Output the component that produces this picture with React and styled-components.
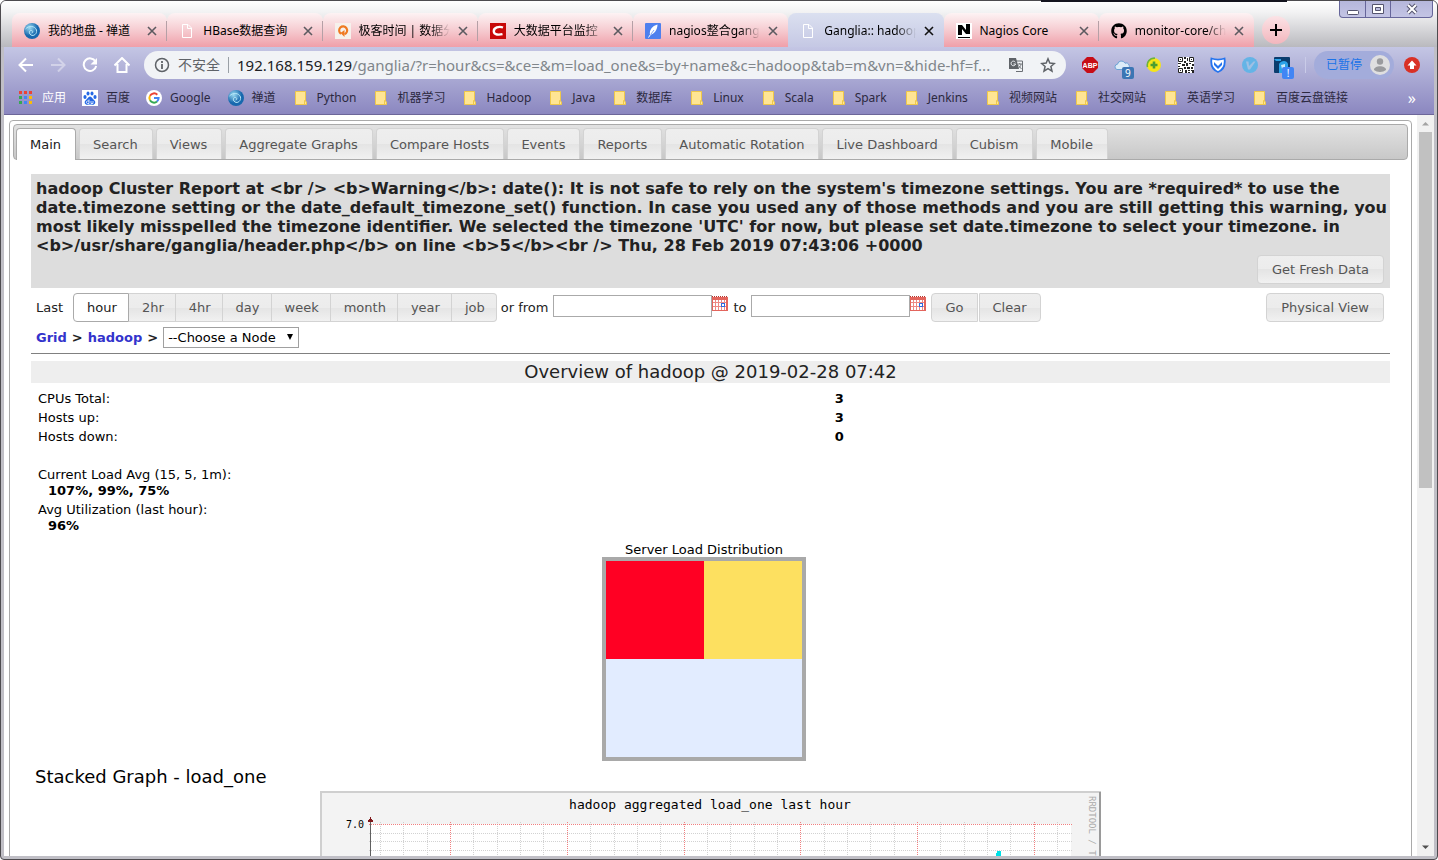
import React, { useState } from "react";
import styled, { createGlobalStyle, css } from "styled-components";
import { FaGithub } from "react-icons/fa";

const uiFont = '"Noto Sans", "Noto Sans CJK SC", sans-serif';
const pageFont = '"DejaVu Sans", sans-serif';

const GlobalStyle = createGlobalStyle`
  * { box-sizing: border-box; }
  html, body, #root { height: 100%; }
  body { margin: 0; overflow: hidden; font: 13px/16px ${pageFont}; color: #222; background: #fff; }
  button, input, select { font: inherit; color: inherit; margin: 0; }
  button { border: 0; padding: 0; background: none; cursor: pointer; }
  svg { display: block; flex: none; }
`;

/* ---------- browser window ---------- */

const BrowserWindow = styled.div`
  display: flex;
  flex-direction: column;
  height: 100vh;
  border: 1px solid #4d4b4f;
  border-radius: 6px 6px 4px 4px;
  background: #c0bfc6;
  overflow: hidden;
`;

const WindowBehind = styled.div`
  position: absolute;
  top: 0;
  right: 151px;
  width: 246px;
  height: 2px;
  background: #15151f;
`;

const TitleStrip = styled.div`
  display: flex;
  flex: none;
  height: 46px;
  padding-left: 11px;
  background: linear-gradient(#fff 0, #f1f1f2 12px, #b9b9be 46px);
  font: 12px/16px ${uiFont};
  color: #000;
`;

const TabRow = styled.div`
  display: flex;
  flex: 0 1 1242px;
  min-width: 0;
  padding-top: 12px;
`;

const BrowserTab = styled.button`
  display: flex;
  flex: 1 1 0;
  min-width: 0;
  align-items: center;
  gap: 8px;
  position: relative;
  height: 34px;
  padding: 2px 10px 0 12px;
  text-align: left;
  border-radius: 8px 8px 0 0;
  background: linear-gradient(#fdf3f4, #f6ccd1 50%, #ef9fa9);
  &:not(:last-child)::after {
    content: "";
    position: absolute;
    right: 0;
    top: 8px;
    width: 1px;
    height: 20px;
    background: #b5a0a6;
  }
  &:has(+ [aria-current])::after { display: none; }
  ${(p) => p.$active && css`
    background: linear-gradient(#dbe0f0, #c5c8e4);
    &&::after { display: none; }
  `}
`;

const TabTitle = styled.span`
  flex: 1;
  min-width: 0;
  overflow: hidden;
  white-space: nowrap;
  ${(p) => p.$fade && css`
    mask-image: linear-gradient(90deg, #000 calc(100% - 20px), transparent);
  `}
`;

const NewTabButton = styled.button`
  display: grid;
  place-items: center;
  flex: none;
  width: 28px;
  height: 28px;
  margin: 15px 0 0 8px;
  border-radius: 14px;
  background: linear-gradient(#fbe3e6, #f3b6bd);
`;

const WindowButtons = styled.div`
  display: flex;
  flex: none;
  height: 17px;
  margin: 0 4px 0 auto;
  border: 1px solid #66669a;
  border-top: 0;
  border-radius: 0 0 4px 4px;
  background: linear-gradient(#b5b7db, #c3c4e4);
`;

const WindowButton = styled.button`
  display: grid;
  place-items: center;
  width: ${(p) => (p.$wide ? 42 : 25)}px;
  & + & { border-left: 1px solid #66669a; }
`;

const BrowserChrome = styled.div`
  flex: none;
  margin: 0 3px;
  height: 68px;
  border-bottom: 1px solid #6c6699;
  background: linear-gradient(#c4c6e4, #8b87c0);
  font: 12px/16px ${uiFont};
  color: #2c2940;
`;

const Toolbar = styled.div`
  display: flex;
  align-items: center;
  height: 36px;
  padding: 0 14px;
`;

const NavButtons = styled.div`
  display: flex;
  gap: 16px;
  margin-right: 14px;
`;

const IconButton = styled.button`
  display: grid;
  place-items: center;
  position: relative;
  flex: none;
  width: 16px;
  height: 16px;
  opacity: ${(p) => (p.$dim ? 0.4 : 1)};
`;

const Omnibox = styled.div`
  display: flex;
  flex: 1;
  align-items: center;
  min-width: 0;
  height: 28px;
  padding: 0 10px;
  border-radius: 14px;
  background: #f1f3f6;
  font-size: 15px;
  line-height: 20px;
  color: #202124;
`;

const Security = styled.span`
  margin-left: 8px;
  padding-right: 8px;
  border-right: 1px solid #9aa0a6;
  font-size: 14px;
  line-height: 16px;
  color: #5f6368;
  white-space: nowrap;
`;

const Host = styled.span`
  margin-left: 8px;
`;

const UrlInput = styled.input`
  flex: 1;
  min-width: 0;
  height: 20px;
  padding: 0;
  border: 0;
  background: none;
  color: #80868b;
  text-overflow: ellipsis;
`;

const OmniActions = styled.div`
  display: flex;
  gap: 16px;
  margin-left: 8px;
`;

const Extensions = styled.div`
  display: flex;
  gap: 16px;
  margin: 0 15px 0 16px;
`;

const Badge = styled.span`
  position: absolute;
  left: 8px;
  top: 10px;
  width: 12px;
  height: 12px;
  border-radius: 2px;
  background: ${(p) => p.$color};
  color: #fff;
  font-size: 10px;
  line-height: 12px;
  text-align: center;
`;

const ProfilePill = styled.button`
  display: flex;
  align-items: center;
  gap: 8px;
  height: 28px;
  margin: 0 10px 0 8px;
  padding: 0 4px 0 12px;
  border-radius: 14px;
  background: #a3acdb;
  color: #1a73e8;
  white-space: nowrap;
`;

const Divider = styled.span`
  width: 1px;
  height: 16px;
  background: #c9cbe8;
`;

const BookmarkBar = styled.nav`
  display: flex;
  align-items: center;
  gap: 16px;
  height: 30px;
  padding: 0 18px 0 14px;
`;

const Bookmark = styled.a`
  display: flex;
  align-items: center;
  gap: 8px;
  color: ${(p) => (p.$light ? "#fff" : "inherit")};
  text-decoration: none;
  white-space: nowrap;
  &:nth-child(n + 3) { padding-right: 1px; }
`;

const MoreButton = styled.button`
  margin-left: auto;
  color: #fff;
  font-size: 16px;
`;

const Viewport = styled.div`
  display: flex;
  flex: 1;
  min-height: 0;
  margin: 0 3px 3px;
  background: #fff;
`;

const ScrollArea = styled.div`
  flex: 1;
  min-width: 0;
  padding: 5px;
  overflow: hidden;
`;

const ScrollBar = styled.div`
  display: flex;
  flex: none;
  flex-direction: column;
  align-items: center;
  width: 17px;
  background: #f1f1f1;
`;

const ScrollThumb = styled.div`
  width: 13px;
  height: 48%;
  margin-bottom: auto;
  background: #c1c1c1;
`;

/* ---------- ganglia page ---------- */

const TabsFrame = styled.div`
  padding: 3px;
  border: 1px solid #aaa;
  border-radius: 4px;
`;

const NavTabs = styled.nav`
  display: flex;
  gap: 3px;
  height: 36px;
  padding: 3px 2px 0;
  border: 1px solid #aaa;
  border-radius: 4px;
  background: linear-gradient(#e2e2e2, #c8c8c8);
`;

const NavTab = styled.a`
  height: 31px;
  padding: 8px 14px 0 13px;
  border: 1px solid #d3d3d3;
  border-bottom: 0;
  border-radius: 4px 4px 0 0;
  background: linear-gradient(#eee 0, #ececec 50%, #e4e4e4 50%, #f1f1f1);
  color: #555;
  text-decoration: none;
  white-space: nowrap;
  ${(p) => p.$active && css`
    height: 32px;
    border-color: #aaa;
    background: #fff;
    color: #212121;
  `}
`;

const Panel = styled.main`
  padding: 14px 18px;
`;

const ReportHeader = styled.header`
  padding: 5px 0 4px 5px;
  background: #ddd;
`;

const ReportTitle = styled.h1`
  margin: 0;
  font-size: 16px;
  line-height: 19px;
  font-weight: 700;
`;

const buttonFace = css`
  border: 1px solid #d3d3d3;
  background: linear-gradient(#eee 0, #ececec 50%, #e4e4e4 50%, #f1f1f1);
  color: #555;
`;

const Button = styled.button`
  ${buttonFace}
  height: 29px;
  padding: 0 ${(p) => (p.$roomy ? 14 : 13)}px;
  border-radius: ${(p) => p.$corners || "4px"};
  white-space: nowrap;
`;

const ButtonLine = styled.div`
  display: flex;
  justify-content: flex-end;
  margin-right: 6px;
`;

const FilterRow = styled.div`
  display: flex;
  align-items: center;
  height: 29px;
  margin-top: 5px;
  padding: 0 6px 0 5px;
  white-space: nowrap;
`;

const RangeGroup = styled.fieldset`
  display: flex;
  min-width: 0;
  margin: 0 4px 0 10px;
  padding: 0;
  border: 0;
`;

const RangeOption = styled.label`
  ${buttonFace}
  height: 29px;
  padding: 6px 11px 0 13px;
  border-left-width: 0;
  cursor: pointer;
  &:first-of-type { border-left-width: 1px; border-radius: 4px 0 0 4px; }
  &:last-of-type { border-radius: 0 4px 4px 0; }
  &:has(input:checked) { border-color: #aaa; background: #fff; color: #212121; }
  input { appearance: none; position: absolute; width: 0; height: 0; }
`;

const DateField = styled.span`
  display: flex;
  align-self: flex-start;
  margin: 2px 5px 0;
  input {
    width: 159px;
    height: 22px;
    padding: 1px 4px;
    border: 1px solid #aaa;
    background: #fff;
  }
`;

const CalendarButton = styled.button`
  align-self: flex-start;
`;

const ButtonPair = styled.span`
  display: flex;
  gap: 1px;
  margin-right: auto;
`;

const Breadcrumb = styled.div`
  display: flex;
  align-items: center;
  gap: 5px;
  margin-top: 5px;
  padding: 0 5px 5px;
  border-bottom: 1px solid #808080;
  font-weight: 700;
  a { color: #3333cc; text-decoration: none; }
`;

const NodeSelect = styled.span`
  position: relative;
  select {
    appearance: none;
    display: block;
    width: 136px;
    height: 21px;
    padding: 0 4px;
    border: 1px solid #a0a0a0;
    border-radius: 0;
    background: #fff;
    color: #000;
    font-weight: 400;
  }
  svg { position: absolute; right: 5px; top: 6px; pointer-events: none; }
`;

const Overview = styled.h2`
  margin: 7px 0 6px;
  background: #eee;
  font-size: 18px;
  line-height: 22px;
  font-weight: 400;
  text-align: center;
`;

const Stats = styled.table`
  width: 100%;
  border-collapse: collapse;
  line-height: 16px;
  color: #000;
  th, td { padding: 2px 7px 1px; text-align: left; vertical-align: top; }
  th { width: 59%; font-weight: 400; }
  td { padding-left: 2px; font-weight: 700; }
`;

const Detail = styled.div`
  padding-left: 10px;
  font-weight: 700;
`;

const Spacer = styled.tr`
  height: 19px;
`;

const LoadFigure = styled.figure`
  display: flex;
  flex-direction: column;
  align-items: center;
  margin: 7px 13px 0 0;
  line-height: 15px;
  color: #000;
`;

const LoadGrid = styled.div`
  display: grid;
  grid-template-columns: 1fr 1fr;
  grid-template-rows: 1fr 1fr;
  width: 204px;
  height: 204px;
  border: 4px solid #a9a9a9;
`;

const LoadCell = styled.div`
  background: ${(p) => p.$color};
  grid-column: span ${(p) => p.$span || 1};
`;

const SectionTitle = styled.h2`
  margin: 4px 0 2px 4px;
  font-size: 18px;
  line-height: 24px;
  font-weight: 400;
  color: #000;
`;

const GraphHolder = styled.div`
  display: flex;
  justify-content: center;
`;

/* ---------- drawings ---------- */

const Swirl = () => (
  <svg width="16" height="16" viewBox="0 0 16 16">
    <defs>
      <radialGradient id="swirl" cx="35%" cy="30%"><stop offset="0" stopColor="#9edcf2" /><stop offset="1" stopColor="#1768ae" /></radialGradient>
    </defs>
    <circle cx="8" cy="8" r="8" fill="url(#swirl)" />
    <path d="M1.500 6C5 2 11 3 12.500 7c.8 4-3 6.500-5.500 5-2.500-1.500-2-5 .5-4.500 1.800.3 1.500 2.500.2 2.500" fill="none" stroke="#b5e6f8" strokeWidth="1" />
  </svg>
);
const Doc = () => (
  <svg width="16" height="16" viewBox="0 0 16 16">
    <path d="M3.500 1.500h5.500l3.500 3.500v9.500h-9zM8.500 1.500v4h4" fill="none" stroke="#fff" />
  </svg>
);
const GeekTime = () => (
  <svg width="16" height="16" viewBox="0 0 16 16">
    <rect width="16" height="16" fill="#f6f1ec" />
    <path d="M6 10.800A4 4 0 1 1 9.500 11.200" fill="none" stroke="#ef7a22" strokeWidth="2.200" />
    <path d="M9.500 7v7L5.500 10z" fill="#ef7a22" />
  </svg>
);
const Csdn = () => (
  <svg width="16" height="16" viewBox="0 0 16 16">
    <rect width="16" height="16" fill="#c80808" />
    <path d="M13 4.500C9 3 3.500 4.500 3.800 8.500c.3 3.500 5 3.500 8.700 2.700" fill="none" stroke="#fff" strokeWidth="2.400" />
  </svg>
);
const Feather = () => (
  <svg width="16" height="16" viewBox="0 0 16 16">
    <rect width="16" height="16" rx="1" fill="#4f80ee" />
    <path d="M12.500 1.500C7 3 4 7 5 12c4-1 7.500-5 7.500-10.500z" fill="#fff" />
    <path d="M4.500 13 9 7" stroke="#4f80ee" strokeWidth=".7" />
    <path d="M3.500 14.500 5.500 11.500" stroke="#fff" strokeWidth="1" />
  </svg>
);
const Nagios = () => (
  <svg width="16" height="16" viewBox="0 0 16 16">
    <rect width="16" height="16" fill="#fff" />
    <path d="M2 12V2h4l4 5V1h4v10h-4L6 6v6z" fill="#000" />
    <path d="M2 14.500h12" stroke="#000" />
  </svg>
);
const Close = ({ color = "#5c5a60" }) => (
  <svg width="10" height="10" viewBox="0 0 10 10"><path d="M1 1l8 8M9 1L1 9" stroke={color} strokeWidth="1.600" /></svg>
);
const Folder = () => (
  <svg width="16" height="16" viewBox="0 0 16 16">
    <path d="M2.500 1.500h10v9.500l1 1v2.500h-11z" fill="#ffe594" stroke="#efc84a" />
    <path d="M11.500 14v-3.500h1" fill="none" stroke="#efc84a" />
  </svg>
);
const AppsIcon = () => (
  <svg width="16" height="16" viewBox="0 0 16 16">
    {["#ea4335", "#ea4335", "#ea4335", "#34a853", "#4285f4", "#fbbc05", "#34a853", "#4285f4", "#fbbc05"].map((c, i) => (
      <rect key={i} x={1 + (i % 3) * 5} y={1 + Math.floor(i / 3) * 5} width="3" height="3" fill={c} />
    ))}
  </svg>
);
const Baidu = () => (
  <svg width="16" height="16" viewBox="0 0 16 16">
    <rect width="16" height="16" fill="#fff" />
    <g fill="#2468e5">
      <ellipse cx="3" cy="7" rx="1.600" ry="2" /><ellipse cx="6" cy="3.500" rx="1.500" ry="2.100" />
      <ellipse cx="10" cy="3.500" rx="1.500" ry="2.100" /><ellipse cx="13" cy="7" rx="1.600" ry="2" />
      <path d="M8 6.500c2 0 2.500 2.500 4 3.500 2.500 2 1 5-1.500 4.800-2-.3-3-.3-5 0C3 15 1.500 12 4 10c1.500-1 2-3.500 4-3.500z" />
    </g>
    <path d="M7 9.500v4H5.500c-1.500 0-1.500-2.500 0-2.500H7M9 11v2.500h2V11" fill="none" stroke="#fff" strokeWidth=".8" />
  </svg>
);
const Google = () => (
  <svg width="16" height="16" viewBox="0 0 16 16">
    <circle cx="8" cy="8" r="8" fill="#fff" />
    <g fill="none" strokeWidth="2">
      <path d="M11.300 4.700A4.600 4.600 0 0 0 4 5.800" stroke="#ea4335" /><path d="M4 5.800a4.600 4.600 0 0 0 0 4.500" stroke="#fbbc05" />
      <path d="M4 10.300a4.600 4.600 0 0 0 7 1.200" stroke="#34a853" /><path d="M11 11.500A4.600 4.600 0 0 0 12.600 8H8" stroke="#4285f4" />
    </g>
  </svg>
);
const Stroke = ({ d, color = "#fff", w = 2 }) => (
  <svg width="16" height="16" viewBox="0 0 16 16"><path d={d} fill="none" stroke={color} strokeWidth={w} /></svg>
);
const Reload = () => (
  <svg width="16" height="16" viewBox="0 0 16 16">
    <path d="M13.500 4.500A6.300 6.300 0 1 0 14.200 9" fill="none" stroke="#fff" strokeWidth="2" />
    <path d="M15 1v6.500H8.500z" fill="#fff" />
  </svg>
);
const Translate = () => (
  <svg width="16" height="16" viewBox="0 0 16 16">
    <path d="M6 4h8.500v10.500H8" fill="#f1f3f6" stroke="#6b6f74" />
    <path d="M1 1h7l3 11H1z" fill="#5f6368" />
    <path d="M7.300 5.200A2.300 2.300 0 1 0 7.600 7H5.500" fill="none" stroke="#f1f3f6" />
    <path d="M9.500 7H14M11.700 6v1M13 7c0 2-1.500 3.500-3 4.500M10.500 8.500l3 3.500" fill="none" stroke="#6b6f74" strokeWidth=".9" />
  </svg>
);
const Abp = () => (
  <svg width="16" height="16" viewBox="0 0 16 16">
    <path d="M5 0h6l5 5v6l-5 5H5l-5-5V5z" fill="#c70d16" />
    <text x="8" y="10.500" fontSize="7" fontWeight="700" fill="#fff" textAnchor="middle" fontFamily="Liberation Sans">ABP</text>
  </svg>
);
const Cloud = () => (
  <svg width="16" height="16" viewBox="0 0 16 16">
    <path d="M3 12.500a2.700 2.700 0 0 1 .5-5.300 4 4 0 0 1 7.500-1 3.200 3.200 0 0 1 2 6.300z" fill="#dcecf8" stroke="#6ba2d4" />
  </svg>
);
const PlusBall = () => (
  <svg width="16" height="16" viewBox="0 0 16 16">
    <circle cx="8" cy="8" r="7" fill="#f6e51a" />
    <path d="M1.500 10A7 7 0 0 1 9 1.200" fill="none" stroke="#6db33b" strokeWidth="1.600" />
    <path d="M8 4.500v7M4.500 8h7" stroke="#4a9e32" strokeWidth="2.600" />
  </svg>
);
const QrCode = () => (
  <svg width="16" height="16" viewBox="0 0 16 16">
    <rect width="16" height="16" fill="#fff" />
    <path d="M.5.500h4v4h-4zM11.500.500h4v4h-4zM.5 11.500h4v4h-4z" fill="none" stroke="#222" />
    <path d="M2 2h1v1H2zM13 2h1v1h-1zM2 13h1v1H2zM6 0h2v2H6zM9 1h1v3H9zM6 4h2v2H6zM0 6h3v1H0zM4 7h3v2H4zM8 6h2v3H8zM11 6h2v1h-2zM14 7h2v2h-2zM0 9h2v1H0zM6 10h2v2H6zM9 10h3v2H9zM13 10h2v2h-2zM7 13h2v3H7zM10 13h2v1h-2zM13 13h3v3h-2v-2h-1zM10 15h2v1h-2z" fill="#222" />
  </svg>
);
const Shield = () => (
  <svg width="16" height="16" viewBox="0 0 16 16">
    <path d="M1.500 1.500C6 3 10 3 14.500 1.500 15.500 8 13 13 8 15 3 13 .5 8 1.500 1.500z" fill="#fff" stroke="#2574ee" strokeWidth="1.800" />
    <path d="M4 5l4 4 4-4v3l-4 4-4-4z" fill="#2574ee" />
  </svg>
);
const VimBall = () => (
  <svg width="16" height="16" viewBox="0 0 16 16">
    <circle cx="8" cy="8" r="8" fill="#64b4e6" />
    <path d="M4 4.500h2.500L7 9l4.500-4.500h2L8 12.500H6z" fill="#9fc0e4" />
  </svg>
);
const Portrait = () => (
  <svg width="16" height="16" viewBox="0 0 16 16">
    <rect width="16" height="16" rx="1" fill="#0b3d6e" />
    <path d="M0 2h7v2H2zM5 7c2-4 8-4 9 0v9H5z" fill="#2ba3e8" /><path d="M7 8l4-1v5H8z" fill="#c7e9f8" />
  </svg>
);
const Avatar = () => (
  <svg width="20" height="20" viewBox="0 0 20 20">
    <circle cx="10" cy="10" r="10" fill="#dfdfe0" /><circle cx="10" cy="6.500" r="3.200" fill="#9a9b9e" />
    <path d="M4 15c0-5 12-5 12 0-3 2.500-9 2.500-12 0z" fill="#9a9b9e" />
  </svg>
);
const UpdateIcon = () => (
  <svg width="16" height="16" viewBox="0 0 16 16">
    <circle cx="8" cy="8" r="8" fill="#d93025" /><path d="M8 3.500l4.500 5H10V12H6V8.500H3.500z" fill="#fff" />
  </svg>
);
const Calendar = () => (
  <svg width="16" height="16" viewBox="0 0 16 16">
    <path d="M0 1.500h16" stroke="#b5332b" strokeDasharray="1 1" />
    <rect y="2" width="16" height="14" fill="#e3655d" />
    <path d="M1 5h13v10H1z" fill="#fff" />
    <path d="M1 7.500h13M1 11.500h13M3.500 5v10M6.500 5v10M9.500 5v10M12.500 5v10" stroke="#ee8a84" />
    <rect x="9.500" y="8.500" width="3" height="3" fill="#fff" stroke="#2f6be0" />
  </svg>
);

const gridLines = Array.from({ length: 30 }, (_, i) => ({ x: Math.round(60 + i * 23.35) + 0.5, major: i % 5 === 3 }));

const LoadGraph = () => (
  <svg width="781" height="120" viewBox="0 0 781 120" shapeRendering="crispEdges" fontFamily='"DejaVu Sans Mono", monospace'>
    <rect width="781" height="120" fill="#f3f3f3" />
    <path d="M0 1h781M1 0v120" stroke="#cfcfcf" strokeWidth="2" />
    <path d="M780 1v119" stroke="#9a9a9a" strokeWidth="2" />
    <rect x="51" y="33" width="700" height="87" fill="#fff" />
    <text x="390" y="18" fontSize="13" textAnchor="middle" fill="#000">hadoop aggregated load_one last hour</text>
    <text x="44" y="37" fontSize="10" textAnchor="end" fill="#000">7.0</text>
    {[42.5, 50.5, 59.5, 68.5].map((y) => (
      <path key={y} d={`M49 ${y}h704`} stroke="#d2d2d2" strokeDasharray="1 1" />
    ))}
    {gridLines.map(({ x, major }) => (
      <path key={x} d={`M${x} 31v89`} stroke={major ? "#f08080" : "#d2d2d2"} strokeDasharray="1 1" />
    ))}
    <path d="M49 33.500h704" stroke="#f08080" strokeDasharray="1 1" />
    <path d="M50.500 120V30" stroke="#606060" />
    <path d="M47.500 31h6l-3-5z" fill="#80171a" />
    <path d="M676 120V64l1-4h4v3l1 3v54z" fill="#00e0e6" />
    <text transform="translate(769 5) rotate(90)" fontSize="9" fill="#aaa">RRDTOOL / TOBI OETIKER</text>
  </svg>
);

/* ---------- data ---------- */

const browserTabs = [
  { icon: <Swirl />, title: "我的地盘 - 禅道" },
  { icon: <Doc />, title: "HBase数据查询" },
  { icon: <GeekTime />, title: "极客时间 | 数据分", fade: true },
  { icon: <Csdn />, title: "大数据平台监控（", fade: true },
  { icon: <Feather />, title: "nagios整合gang", fade: true },
  { icon: <Doc />, title: "Ganglia:: hadoop", active: true, fade: true },
  { icon: <Nagios />, title: "Nagios Core" },
  { icon: <FaGithub size={16} />, title: "monitor-core/ch", fade: true },
];

const bookmarks = [
  [<AppsIcon />, "应用"], [<Baidu />, "百度"], [<Google />, "Google"], [<Swirl />, "禅道"],
  ...["Python", "机器学习", "Hadoop", "Java", "数据库", "Linux", "Scala", "Spark", "Jenkins", "视频网站", "社交网站", "英语学习", "百度云盘链接"].map((t) => [<Folder />, t]),
];

const extensions = [
  { name: "Adblock Plus", icon: <Abp /> },
  { name: "Weather", icon: <Cloud />, badge: "9", color: "#3c76b4" },
  { name: "Green Plus", icon: <PlusBall /> },
  { name: "QR code", icon: <QrCode /> },
  { name: "Shield", icon: <Shield /> },
  { name: "Vim", icon: <VimBall /> },
  { name: "Portrait", icon: <Portrait />, badge: "!", color: "#4285f4" },
];

const navTabs = ["Main", "Search", "Views", "Aggregate Graphs", "Compare Hosts", "Events", "Reports", "Automatic Rotation", "Live Dashboard", "Cubism", "Mobile"];
const ranges = ["hour", "2hr", "4hr", "day", "week", "month", "year", "job"];

const DatePicker = ({ label }) => (
  <DateField>
    <input type="text" aria-label={label} />
    <CalendarButton aria-label={`Pick date: ${label}`}><Calendar /></CalendarButton>
  </DateField>
);

export default function App() {
  const [range, setRange] = useState("hour");
  return (
    <BrowserWindow>
      <GlobalStyle />
      <WindowBehind />
      <TitleStrip>
        <TabRow>
          {browserTabs.map((t) => (
            <BrowserTab key={t.title} $active={t.active} aria-current={t.active ? "page" : undefined}>
              {t.icon}
              <TabTitle $fade={t.fade}>{t.title}</TabTitle>
              <Close color={t.active ? "#111" : undefined} />
            </BrowserTab>
          ))}
        </TabRow>
        <NewTabButton aria-label="New tab">
          <svg width="12" height="12" viewBox="0 0 12 12"><path d="M6 0v12M0 6h12" stroke="#000" strokeWidth="2" /></svg>
        </NewTabButton>
        <WindowButtons>
          <WindowButton aria-label="Minimize">
            <svg width="12" height="12" viewBox="0 0 12 12"><rect x=".5" y="7.500" width="11" height="4" rx="1" fill="#fff" stroke="#55556f" /></svg>
          </WindowButton>
          <WindowButton aria-label="Maximize">
            <svg width="12" height="12" viewBox="0 0 12 12"><path d="M.5 1.500h11v9H.5zM3.500 4.500h5v3h-5z" fill="#fff" fillRule="evenodd" stroke="#55556f" /></svg>
          </WindowButton>
          <WindowButton $wide aria-label="Close">
            <svg width="12" height="12" viewBox="0 0 12 12"><path d="M2 2l8 8M10 2l-8 8" stroke="#55556f" strokeWidth="4" /><path d="M2 2l8 8M10 2l-8 8" stroke="#fff" strokeWidth="2" /></svg>
          </WindowButton>
        </WindowButtons>
      </TitleStrip>

      <BrowserChrome>
        <Toolbar>
          <NavButtons>
            <IconButton aria-label="Back"><Stroke d="M15 8H2M8 1.500L1.500 8 8 14.500" /></IconButton>
            <IconButton $dim aria-label="Forward"><Stroke d="M1 8h13M8 1.500L14.500 8 8 14.500" /></IconButton>
            <IconButton aria-label="Reload"><Reload /></IconButton>
            <IconButton aria-label="Home"><Stroke d="M.5 8.500L8 1l7.500 7.500M3.500 7v8h9V7" /></IconButton>
          </NavButtons>
          <Omnibox>
            <svg width="16" height="16" viewBox="0 0 16 16">
              <circle cx="8" cy="8" r="6.500" fill="none" stroke="#5f6368" strokeWidth="1.500" />
              <path d="M8 7v5M8 4v2" stroke="#5f6368" strokeWidth="1.800" />
            </svg>
            <Security>不安全</Security>
            <Host>192.168.159.129</Host>
            <UrlInput aria-label="Address" defaultValue="/ganglia/?r=hour&cs=&ce=&m=load_one&s=by+name&c=hadoop&tab=m&vn=&hide-hf=f..." />
            <OmniActions>
              <IconButton aria-label="Translate"><Translate /></IconButton>
              <IconButton aria-label="Bookmark this page"><Stroke color="#5f6368" w={1.5} d="M8 1.800l1.800 4.300 4.600.4-3.500 3 1.100 4.600L8 11.700l-4 2.400 1.100-4.600-3.500-3 4.600-.4z" /></IconButton>
            </OmniActions>
          </Omnibox>
          <Extensions>
            {extensions.map((e) => (
              <IconButton key={e.name} aria-label={e.name}>
                {e.icon}
                {e.badge && <Badge $color={e.color}>{e.badge}</Badge>}
              </IconButton>
            ))}
          </Extensions>
          <Divider />
          <ProfilePill>已暂停<Avatar /></ProfilePill>
          <IconButton aria-label="Update"><UpdateIcon /></IconButton>
        </Toolbar>
        <BookmarkBar>
          {bookmarks.map(([icon, text], i) => (
            <Bookmark key={text} href="#" $light={i === 0}>{icon}{text}</Bookmark>
          ))}
          <MoreButton aria-label="More bookmarks">»</MoreButton>
        </BookmarkBar>
      </BrowserChrome>

      <Viewport>
        <ScrollArea>
          <TabsFrame>
            <NavTabs>
              {navTabs.map((t, i) => <NavTab key={t} href="#" $active={i === 0}>{t}</NavTab>)}
            </NavTabs>
            <Panel>
              <ReportHeader>
                <ReportTitle>
                  {"hadoop Cluster Report at <br /> <b>Warning</b>: date(): It is not safe to rely on the system's timezone settings. You are *required* to use the date.timezone setting or the date_default_timezone_set() function. In case you used any of those methods and you are still getting this warning, you most likely misspelled the timezone identifier. We selected the timezone 'UTC' for now, but please set date.timezone to select your timezone. in <b>/usr/share/ganglia/header.php</b> on line <b>5</b><br /> Thu, 28 Feb 2019 07:43:06 +0000"}
                </ReportTitle>
                <ButtonLine><Button $roomy>Get Fresh Data</Button></ButtonLine>
              </ReportHeader>

              <FilterRow>
                Last
                <RangeGroup aria-label="Time range">
                  {ranges.map((r) => (
                    <RangeOption key={r}>
                      <input type="radio" name="range" checked={range === r} onChange={() => setRange(r)} />
                      {r}
                    </RangeOption>
                  ))}
                </RangeGroup>
                or from
                <DatePicker label="From" />
                to
                <DatePicker label="To" />
                <ButtonPair>
                  <Button $corners="4px 0 0 4px">Go</Button>
                  <Button $corners="0 4px 4px 0">Clear</Button>
                </ButtonPair>
                <Button $roomy>Physical View</Button>
              </FilterRow>

              <Breadcrumb>
                <a href="#">Grid</a>
                <span>&gt;</span>
                <a href="#">hadoop</a>
                <span>&gt;</span>
                <NodeSelect>
                  <select aria-label="Node"><option>--Choose a Node</option></select>
                  <svg width="8" height="8" viewBox="0 0 8 8"><path d="M1 1h6L4 7z" fill="#000" /></svg>
                </NodeSelect>
              </Breadcrumb>

              <Overview>Overview of hadoop @ 2019-02-28 07:42</Overview>

              <Stats>
                <tbody>
                  <tr><th scope="row">CPUs Total:</th><td>3</td></tr>
                  <tr><th scope="row">Hosts up:</th><td>3</td></tr>
                  <tr><th scope="row">Hosts down:</th><td>0</td></tr>
                  <Spacer />
                  <tr><th scope="row">Current Load Avg (15, 5, 1m):<Detail>107%, 99%, 75%</Detail></th></tr>
                  <tr><th scope="row">Avg Utilization (last hour):<Detail>96%</Detail></th></tr>
                </tbody>
              </Stats>

              <LoadFigure>
                <figcaption>Server Load Distribution</figcaption>
                <LoadGrid>
                  <LoadCell $color="#ff0023" />
                  <LoadCell $color="#fde060" />
                  <LoadCell $color="#e2ecff" $span={2} />
                </LoadGrid>
              </LoadFigure>

              <SectionTitle>Stacked Graph - load_one</SectionTitle>
              <GraphHolder><LoadGraph /></GraphHolder>
            </Panel>
          </TabsFrame>
        </ScrollArea>
        <ScrollBar>
          <svg width="17" height="17" viewBox="0 0 17 17"><path d="M5 10.500h7L8.500 7z" fill="#a3a3a3" /></svg>
          <ScrollThumb />
          <svg width="17" height="17" viewBox="0 0 17 17"><path d="M5 6.500h7L8.500 10z" fill="#505050" /></svg>
        </ScrollBar>
      </Viewport>
    </BrowserWindow>
  );
}
